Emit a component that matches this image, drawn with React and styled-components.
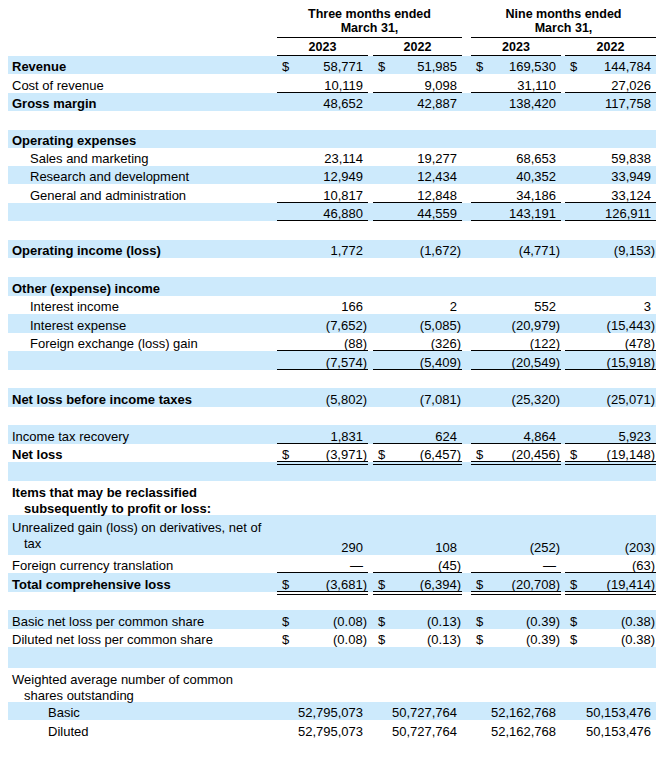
import React from "react";
import styled, { createGlobalStyle } from "styled-components";

const BLUE = "#cdeafc";
const COLS = "269px 91px 5px 89px 9px 90px 4px 91px";
const VALUE_COLS = [2, 4, 6, 8];

const GlobalStyle = createGlobalStyle`
  body {
    margin: 0;
    background: #fff;
    color: #000;
    font-family: "Liberation Sans", Arial, sans-serif;
    font-size: 13px;
  }
`;

const rows = [
  { label: "Revenue", bold: true, dollar: true, vals: ["58,771", "51,985", "169,530", "144,784"] },
  { label: "Cost of revenue", vals: ["10,119", "9,098", "31,110", "27,026"], rule: "single" },
  { label: "Gross margin", bold: true, vals: ["48,652", "42,887", "138,420", "117,758"] },
  {},
  { label: "Operating expenses", bold: true },
  { label: "Sales and marketing", indent: 1, vals: ["23,114", "19,277", "68,653", "59,838"] },
  { label: "Research and development", indent: 1, vals: ["12,949", "12,434", "40,352", "33,949"] },
  { label: "General and administration", indent: 1, vals: ["10,817", "12,848", "34,186", "33,124"], rule: "single" },
  { vals: ["46,880", "44,559", "143,191", "126,911"], rule: "single" },
  {},
  { label: "Operating income (loss)", bold: true, vals: ["1,772", "(1,672)", "(4,771)", "(9,153)"] },
  {},
  { label: "Other (expense) income", bold: true },
  { label: "Interest income", indent: 1, vals: ["166", "2", "552", "3"] },
  { label: "Interest expense", indent: 1, vals: ["(7,652)", "(5,085)", "(20,979)", "(15,443)"] },
  { label: "Foreign exchange (loss) gain", indent: 1, vals: ["(88)", "(326)", "(122)", "(478)"], rule: "single" },
  { vals: ["(7,574)", "(5,409)", "(20,549)", "(15,918)"], rule: "single" },
  {},
  { label: "Net loss before income taxes", bold: true, vals: ["(5,802)", "(7,081)", "(25,320)", "(25,071)"] },
  {},
  { label: "Income tax recovery", vals: ["1,831", "624", "4,864", "5,923"], rule: "single" },
  { label: "Net loss", bold: true, dollar: true, vals: ["(3,971)", "(6,457)", "(20,456)", "(19,148)"], rule: "double" },
  {},
  { label: "Items that may be reclassified", wrap: "subsequently to profit or loss:", bold: true, top: 4 },
  { label: "Unrealized gain (loss) on derivatives, net of", wrap: "tax", top: 5, vals: ["290", "108", "(252)", "(203)"] },
  { label: "Foreign currency translation", vals: ["—", "(45)", "—", "(63)"], rule: "single" },
  { label: "Total comprehensive loss", bold: true, dollar: true, vals: ["(3,681)", "(6,394)", "(20,708)", "(19,414)"], rule: "double" },
  {},
  { label: "Basic net loss per common share", dollar: true, vals: ["(0.08)", "(0.13)", "(0.39)", "(0.38)"] },
  { label: "Diluted net loss per common share", dollar: true, vals: ["(0.08)", "(0.13)", "(0.39)", "(0.38)"] },
  {},
  { label: "Weighted average number of common", wrap: "shares outstanding", top: 4 },
  { label: "Basic", indent: 2, vals: ["52,795,073", "50,727,764", "52,162,768", "50,153,476"] },
  { label: "Diluted", indent: 2, vals: ["52,795,073", "50,727,764", "52,162,768", "50,153,476"] },
];

// row heights as measured, top to bottom
const heights = [
  18, 19, 18, 19, 18, 18, 18, 19, 18, 19, 18, 19, 19, 18, 19, 18, 19,
  18, 19, 18, 19, 18, 19, 34, 40, 18, 19, 18, 19, 18, 21, 34, 18, 19,
];

export default function App() {
  return (
    <>
      <GlobalStyle />
      <Statement>
        <HeadRow $h={32}>
          <PeriodHead $col={2}>Three months ended<br />March 31,</PeriodHead>
          <PeriodHead $col={6}>Nine months ended<br />March 31,</PeriodHead>
        </HeadRow>
        <HeadRow $h={18}>
          {["2023", "2022", "2023", "2022"].map((y, i) => (
            <YearHead key={i} $col={VALUE_COLS[i]}>{y}</YearHead>
          ))}
        </HeadRow>
        {rows.map((r, i) => (
          <Row key={i} $blue={i % 2 === 0} $h={heights[i]}>
            <Label $bold={r.bold} $indent={r.indent || 0} $top={r.top}>
              {r.label}
              {r.wrap && <Hang>{r.wrap}</Hang>}
            </Label>
            {r.vals &&
              r.vals.map((v, j) => (
                <ValueCell key={j} $col={VALUE_COLS[j]} $rule={r.rule}>
                  <span>{r.dollar ? "$" : ""}</span>
                  <Amount $paren={v.endsWith(")")}>{v}</Amount>
                </ValueCell>
              ))}
          </Row>
        ))}
      </Statement>
    </>
  );
}

const Statement = styled.div`
  width: 648px;
  margin: 0 8px;
  padding-top: 6px;
`;

const Row = styled.div`
  display: grid;
  grid-template-columns: ${COLS};
  height: ${(p) => p.$h}px;
  background: ${(p) => (p.$blue ? BLUE : "#fff")};
`;

const HeadRow = styled(Row)`
  background: #fff;
`;

const PeriodHead = styled.div`
  position: relative;
  grid-column: ${(p) => p.$col} / span 3;
  align-self: end;
  padding-bottom: 3px;
  text-align: center;
  font-weight: 700;
  font-size: 12.5px;
  line-height: 14px;
  &::after {
    content: "";
    position: absolute;
    left: 0;
    right: 0;
    bottom: 0;
    height: 1px;
    background: #000;
  }
`;

const YearHead = styled(PeriodHead)`
  grid-column: ${(p) => p.$col};
  padding-bottom: 2px;
  line-height: 14px;
`;

const Label = styled.div`
  grid-column: 1;
  align-self: ${(p) => (p.$top ? "start" : "end")};
  padding: ${(p) => p.$top || 0}px 0 0 ${(p) => 4 + p.$indent * 18}px;
  font-weight: ${(p) => (p.$bold ? 700 : 400)};
  line-height: ${(p) => (p.$top ? 16 : 14)}px;
  white-space: nowrap;
`;

const Hang = styled.span`
  display: block;
  padding-left: 12px;
`;

const ValueCell = styled.div`
  position: relative;
  z-index: 1;
  grid-column: ${(p) => p.$col};
  display: flex;
  align-items: flex-end;
  justify-content: space-between;
  line-height: 14px;
  padding: 0 1px 0 5px;
  &::after {
    content: "";
    display: ${(p) => (p.$rule ? "block" : "none")};
    position: absolute;
    left: 0;
    right: 0;
    bottom: ${(p) => (p.$rule === "double" ? "-3px" : "0")};
    height: ${(p) => (p.$rule === "double" ? "2px" : "1px")};
    background: ${(p) => (p.$rule === "double" ? "transparent" : "#000")};
    border-top: ${(p) => (p.$rule === "double" ? "1px solid #000" : "none")};
    border-bottom: ${(p) => (p.$rule === "double" ? "1px solid #000" : "none")};
  }
`;

const Amount = styled.span`
  padding-right: ${(p) => (p.$paren ? 0 : 4)}px;
`;
